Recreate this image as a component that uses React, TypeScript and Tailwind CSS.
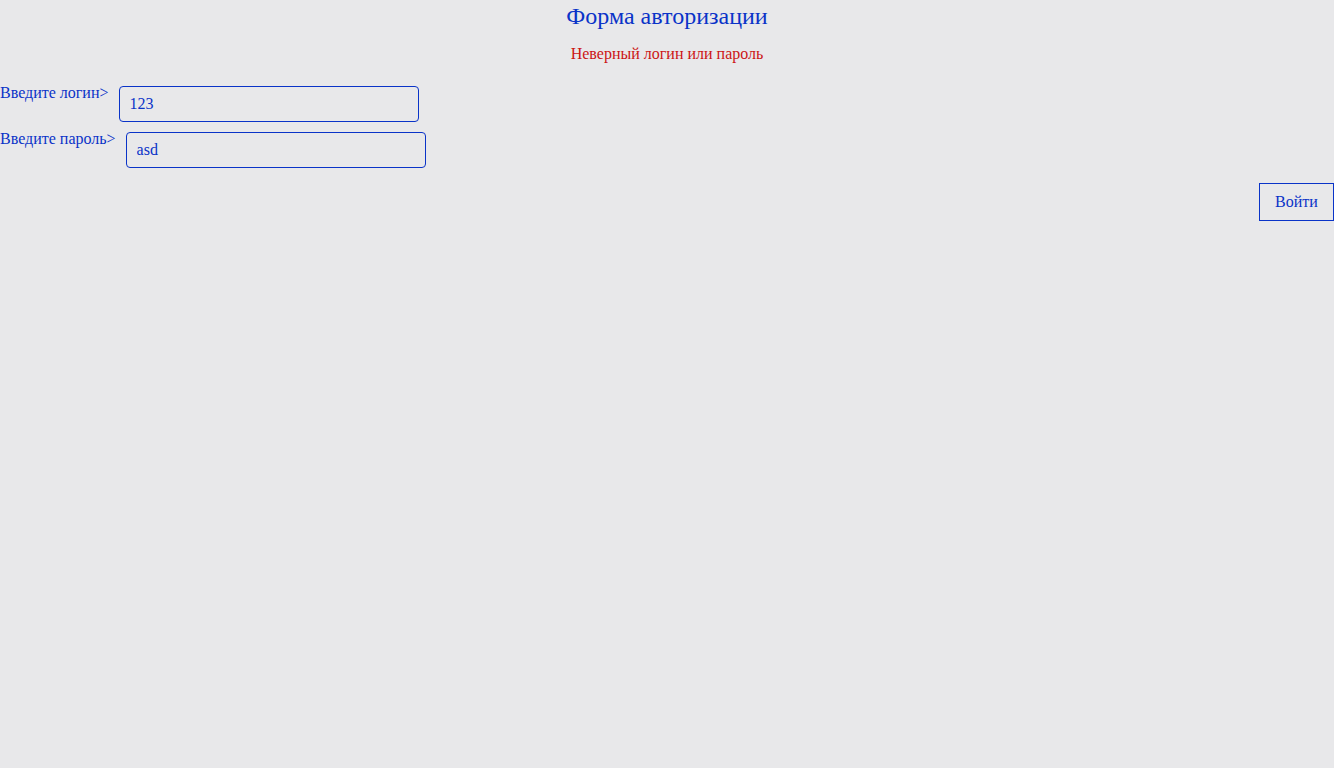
import { useState } from "react";

export default function App() {
    const [login, setLogin] = useState("123");
    const [password, setPassword] = useState("asd");

    return (
        <div className="min-h-screen bg-[#e8e8ea] font-['Liberation_Serif',serif] text-[#0a33c8]">
            <h2 className="pt-[2px] text-center text-[24px] leading-[28px]">Форма авторизации</h2>
            <p className="mt-[15px] text-center text-[16px] leading-[18px] text-[#cc1414]">Неверный логин или пароль</p>

            <form className="mt-[20px]" onSubmit={(e) => e.preventDefault()}>
                <div className="flex items-start">
                    <label className="mt-[1px] text-[16px] leading-[18px]">Введите логин&gt;</label>
                    <input
                        value={login}
                        onChange={(e) => setLogin(e.target.value)}
                        className="ml-[10px] mt-[3px] h-[36px] w-[300px] rounded-[4px] border border-[#0a33c8] bg-transparent px-[10px] text-[16px] text-[#0a33c8] outline-none"
                    />
                </div>
                <div className="mt-[7px] flex items-start">
                    <label className="mt-[1px] text-[16px] leading-[18px]">Введите пароль&gt;</label>
                    <input
                        value={password}
                        onChange={(e) => setPassword(e.target.value)}
                        className="ml-[10px] mt-[3px] h-[36px] w-[300px] rounded-[4px] border border-[#0a33c8] bg-transparent px-[10px] text-[16px] text-[#0a33c8] outline-none"
                    />
                </div>
                <div className="mt-[15px] flex justify-end">
                    <button type="submit" className="h-[38px] w-[75px] border border-[#0a33c8] text-[16px] text-[#0a33c8]">
                        Войти
                    </button>
                </div>
            </form>
        </div>
    );
}
